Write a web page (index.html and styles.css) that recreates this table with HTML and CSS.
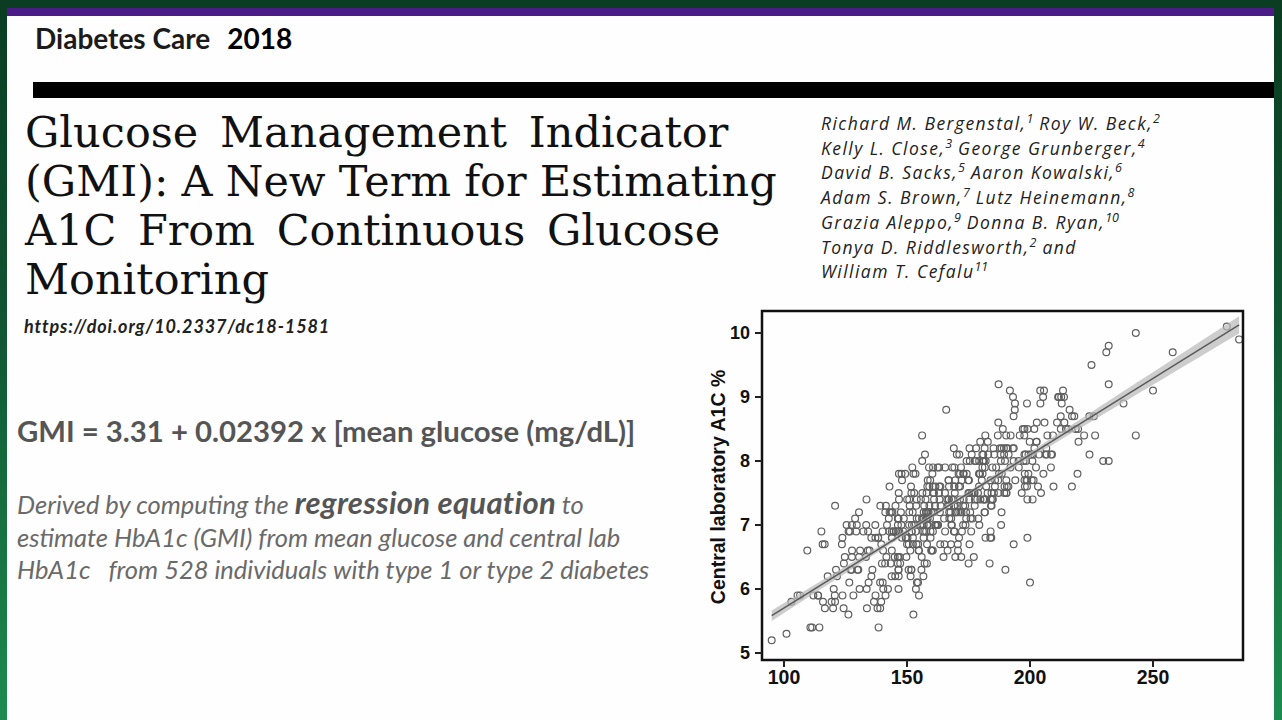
FILE: index.html
```html
<!DOCTYPE html>
<html lang="en">
<head>
<meta charset="utf-8">
<title>Glucose Management Indicator</title>
<link rel="stylesheet" href="styles.css">
</head>
<body>
<div class="slide">
  <header class="brand"><span class="journal">Diabetes Care</span><span class="year">2018</span></header>
  <div class="rule"></div>
  <section class="top">
    <h1 class="title"><span class="wide">Glucose Management Indicator</span><br><span class="tight">(GMI): A New Term for Estimating</span><br><span class="wide">A1C From Continuous Glucose</span><br><span>Monitoring</span></h1>
    <p class="authors">Richard M. Bergenstal,<sup>1</sup> Roy W. Beck,<sup>2</sup><br>Kelly L. Close,<sup>3</sup> George Grunberger,<sup>4</sup><br>David B. Sacks,<sup>5</sup> Aaron Kowalski,<sup>6</sup><br>Adam S. Brown,<sup>7</sup> Lutz Heinemann,<sup>8</sup><br>Grazia Aleppo,<sup>9</sup> Donna B. Ryan,<sup>10</sup><br>Tonya D. Riddlesworth,<sup>2</sup> and<br>William T. Cefalu<sup>11</sup></p>
  </section>
  <section class="lower">
    <div class="text">
      <p class="doi">https://doi.org/10.2337/dc18-1581</p>
      <p class="formula">GMI = 3.31 + 0.02392 x [mean glucose (mg/dL)]</p>
      <p class="desc">Derived by computing the <b>regression equation</b> to<br>estimate HbA1c (GMI) from mean glucose and central lab<br>HbA1c&nbsp;&nbsp; from 528 individuals with type 1 or type 2 diabetes</p>
    </div>
    <svg class="chart" viewBox="0 0 560 395" width="560" height="395">
      <g id="pts"></g>
      <g class="axes">
        <rect x="62" y="7" width="481" height="349" fill="none" stroke="#111" stroke-width="2.5"/>
        <path d="M55 29H62M55 93H62M55 157H62M55 221H62M55 285H62M55 349H62" stroke="#222" stroke-width="2"/>
        <path d="M84 356V363M207 356V363M330 356V363M453 356V363" stroke="#222" stroke-width="2"/>
      </g>
      <g class="ticklabels">
        <text class="yt" x="50" y="35" text-anchor="end">10</text>
        <text class="yt" x="50" y="99" text-anchor="end">9</text>
        <text class="yt" x="50" y="163" text-anchor="end">8</text>
        <text class="yt" x="50" y="227" text-anchor="end">7</text>
        <text class="yt" x="50" y="291" text-anchor="end">6</text>
        <text class="yt" x="50" y="355" text-anchor="end">5</text>
        <text class="xt" x="84" y="380" text-anchor="middle">100</text>
        <text class="xt" x="207" y="380" text-anchor="middle">150</text>
        <text class="xt" x="330" y="380" text-anchor="middle">200</text>
        <text class="xt" x="453" y="380" text-anchor="middle">250</text>
        <text class="yl" x="0" y="0" text-anchor="middle" transform="translate(25 183) rotate(-90)">Central laboratory A1C %</text>
      </g>
    </svg>
  </section>
</div>
<script src="script.js"></script>
</body>
</html>
```

FILE: styles.css
```css
html, body {
  margin: 0;
  padding: 0;
}
body {
  width: 1282px;
  height: 720px;
  overflow: hidden;
  background: linear-gradient(to bottom, #0a3d21 0%, #0f5130 40%, #1d8b4f 100%);
}
.slide {
  margin: 8px 8px 0 7px;
  height: 712px;
  box-sizing: border-box;
  border-top: 8px solid #4b1b86;
  background: #fefefe;
  overflow: hidden;
}
.brand {
  padding: 7px 0 0 28px;
  height: 31px;
  font: 700 28px/31px Lato, "Open Sans", sans-serif;
  color: #1b1b1b;
}
.brand .year {
  margin-left: 17px;
  color: #000;
}
.rule {
  margin: 28px 0 0 26px;
  height: 16px;
  background: #000;
}
.top {
  display: grid;
  grid-template-columns: 814px 1fr;
  margin-top: 10px;
}
.title {
  margin: 0;
  padding-left: 18px;
  font: 400 43px/49px "DejaVu Serif", "Liberation Serif", serif;
  color: #111;
  white-space: nowrap;
}
.title .wide { word-spacing: 8px; }
.title .tight { word-spacing: -0.5px; }
.authors {
  margin: 3px 0 0;
  font: italic 400 17.5px/24.7px "Open Sans", sans-serif;
  letter-spacing: 1.45px;
  color: #222;
  white-space: nowrap;
}
.authors sup {
  font-size: 12.5px;
  line-height: 0;
  letter-spacing: 0;
  vertical-align: 7px;
}
.lower {
  display: flex;
}
.text {
  width: 693px;
  padding-left: 10px;
  box-sizing: border-box;
}
.doi {
  margin: 12px 0 0 7px;
  font: italic 700 18px/20px Lato, sans-serif;
  letter-spacing: 0.9px;
  color: #222;
}
.formula {
  margin: 79px 0 0;
  font: 700 29.3px/32px Lato, sans-serif;
  color: #555;
}
.desc {
  margin: 41px 0 0;
  font: italic 400 25.5px/32.5px Lato, sans-serif;
  color: #6a6a6a;
}
.desc b {
  font-weight: 700;
  color: #555;
  font-size: 31px;
  line-height: 0;
  letter-spacing: 0.3px;
}
.chart {
  display: block;
  flex: none;
}
.ticklabels text {
  font-family: "Liberation Sans", Arial, sans-serif;
  font-weight: 700;
  fill: #111;
}
.ticklabels .yt { font-size: 18px; }
.ticklabels .xt { font-size: 19.5px; }
.ticklabels .yl { font-size: 19.5px; }
```

FILE: script.js
```js
(function () {
  var NS = "http://www.w3.org/2000/svg";
  var seed = 20180528;
  function rnd() {
    seed |= 0; seed = (seed + 0x6D2B79F5) | 0;
    var t = Math.imul(seed ^ (seed >>> 15), 1 | seed);
    t = (t + Math.imul(t ^ (t >>> 7), 61 | t)) ^ t;
    return ((t ^ (t >>> 14)) >>> 0) / 4294967296;
  }
  function norm() {
    var u = rnd() || 1e-9, v = rnd();
    return Math.sqrt(-2 * Math.log(u)) * Math.cos(2 * Math.PI * v);
  }
  function X(x) { return 84 + (x - 100) * 2.46; }
  function Y(y) { return 29 + (10 - y) * 64; }
  var g = document.getElementById("pts");
  function dot(x, y) {
    var c = document.createElementNS(NS, "circle");
    c.setAttribute("cx", X(x).toFixed(1));
    c.setAttribute("cy", Y(y).toFixed(1));
    c.setAttribute("r", "3.4");
    c.setAttribute("fill", "none");
    c.setAttribute("stroke", "#5f5f5f");
    c.setAttribute("stroke-width", "1.2");
    g.appendChild(c);
  }
  var fixed = [[95, 5.2], [101, 5.3], [103, 5.8], [243, 10.0], [258, 9.7], [250, 9.1],
    [280, 10.1], [285, 9.9], [243, 8.4], [232, 9.2], [231, 9.7], [232, 9.8], [238, 8.9],
    [200, 6.1], [190, 6.3], [225, 9.5], [214, 8.6], [232, 8.0], [222, 8.4]];
  fixed.forEach(function (p) { dot(p[0], p[1]); });
  var n = fixed.length;
  while (n < 528) {
    var x = 167 + 24 * norm();
    if (rnd() < 0.08) x = 100 + rnd() * 120;
    if (x < 96 || x > 235) continue;
    var y = 3.31 + 0.02392 * x + 0.5 * norm();
    y = Math.round(y * 10) / 10;
    if (y < 5.2 || y > 9.2) continue;
    dot(x, y);
    n++;
  }
  var up = [], lo = [];
  for (var xx = 95; xx <= 285; xx += 5) {
    var m = 3.31 + 0.02392 * xx;
    var hw = Math.sqrt(0.03 * 0.03 + Math.pow(0.0011 * (xx - 165), 2));
    up.push(X(xx).toFixed(1) + "," + Y(m + hw).toFixed(1));
    lo.unshift(X(xx).toFixed(1) + "," + Y(m - hw).toFixed(1));
  }
  var band = document.createElementNS(NS, "polygon");
  band.setAttribute("points", up.concat(lo).join(" "));
  band.setAttribute("fill", "#b8b8b8");
  band.setAttribute("fill-opacity", "0.7");
  g.appendChild(band);
  var line = document.createElementNS(NS, "line");
  line.setAttribute("x1", X(95)); line.setAttribute("y1", Y(3.31 + 0.02392 * 95));
  line.setAttribute("x2", X(285)); line.setAttribute("y2", Y(3.31 + 0.02392 * 285));
  line.setAttribute("stroke", "#5a5a5a");
  line.setAttribute("stroke-width", "1.5");
  g.appendChild(line);
})();
```
